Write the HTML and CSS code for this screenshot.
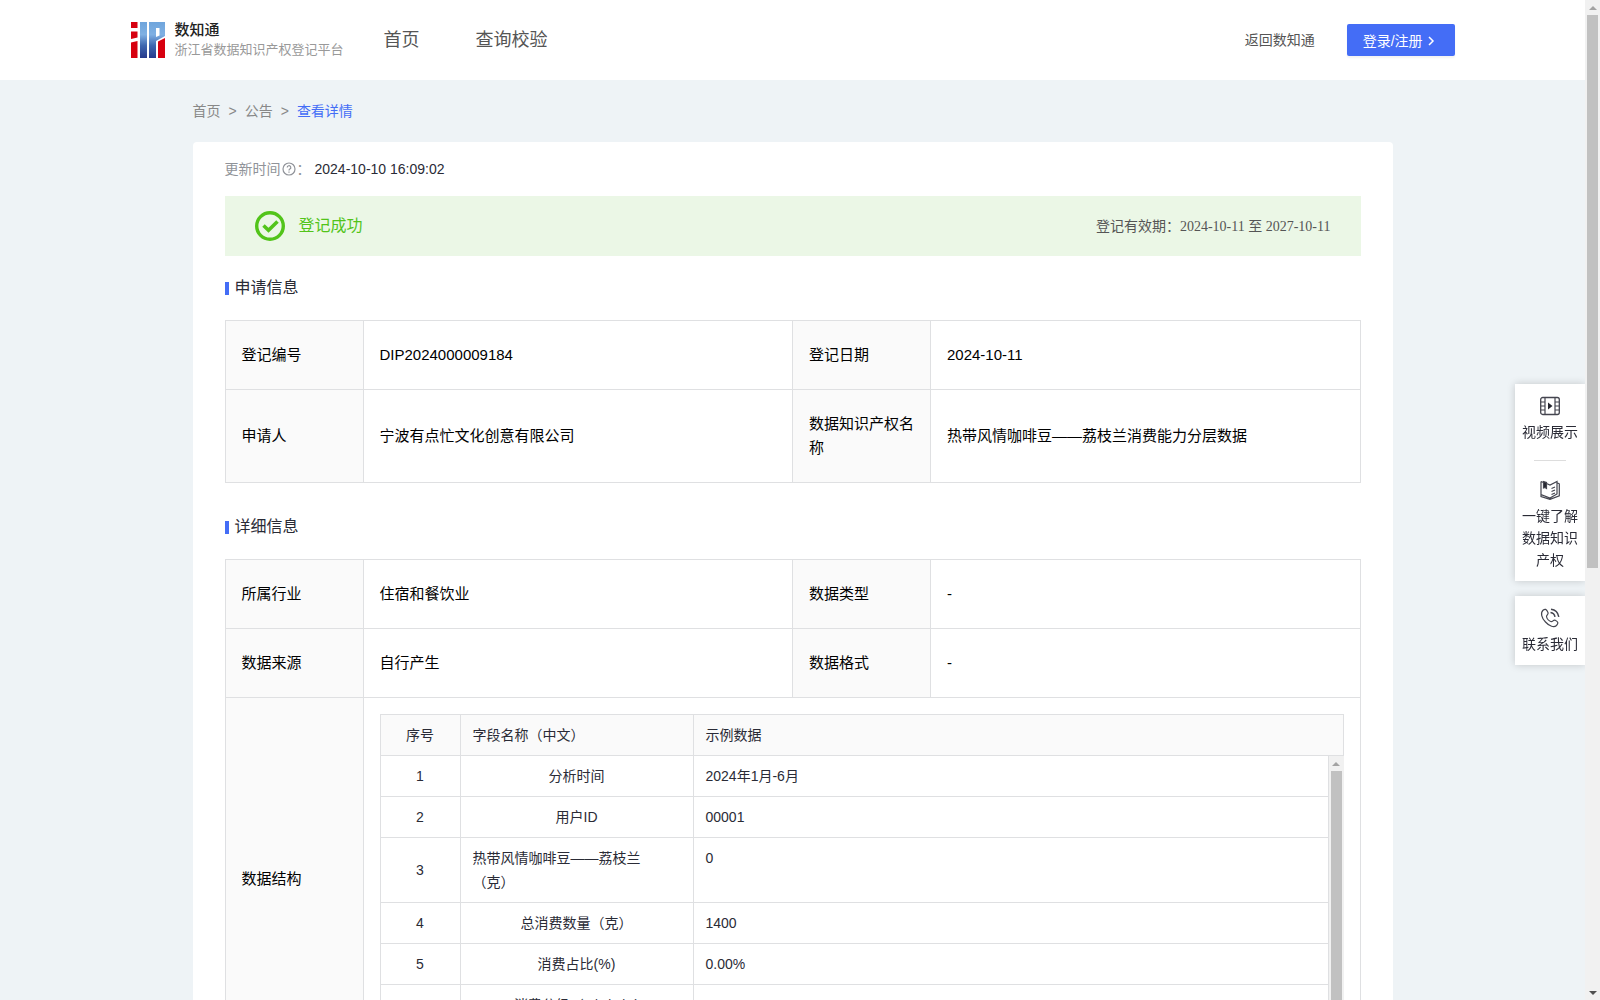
FILE: index.html
```html
<!DOCTYPE html>
<html lang="zh-CN">

<head>
    <meta charset="UTF-8">
    <meta name="viewport" content="width=device-width, initial-scale=1.0">
    <title>浙江省数据知识产权登记平台</title>
    <link rel="stylesheet" href="styles.css">
</head>

<body>
    <header class="header">
        <div class="header-inner">
            <a class="logo" href="#">
                <svg class="logo-mark" viewBox="0 0 34 36" aria-hidden="true">
                    <defs>
                        <linearGradient id="blue" x1="0" y1="0" x2="0" y2="1">
                            <stop offset="0" stop-color="#6fa5dc" />
                            <stop offset="0.35" stop-color="#7fb0e3" />
                            <stop offset="0.65" stop-color="#3f68b0" />
                            <stop offset="1" stop-color="#263a8c" />
                        </linearGradient>
                    </defs>
                    <path fill="#d7000f" d="M0 0h6.500v6H0zM0 9.500h6.500v6L0 17zM0 20.500l6.500-1.500v17H0z" />
                    <path fill="url(#blue)" d="M9 0h7v36H9zM18 0h16v14l-9 5v17h-7z" />
                    <path fill="#fff" d="M25 6h3.500v7.500L25 15z" />
                    <path fill="#d7000f" d="M27 19.500l7-3.500v20h-7z" />
                </svg>
                <span class="logo-text">
                    <span class="logo-name">数知通</span>
                    <span class="logo-desc">浙江省数据知识产权登记平台</span>
                </span>
            </a>
            <nav class="nav">
                <a href="#">首页</a>
                <a href="#">查询校验</a>
            </nav>
            <a class="back" href="#">返回数知通</a>
            <button class="login" type="button">登录/注册
                <svg width="8" height="10" viewBox="0 0 8 10" aria-hidden="true">
                    <path d="M2 1l4 4-4 4" fill="none" stroke="#fff" stroke-width="1.500" />
                </svg>
            </button>
        </div>
    </header>

    <main class="main">
        <nav class="crumbs">
            <a href="#">首页</a>
            <span>&gt;</span>
            <a href="#">公告</a>
            <span>&gt;</span>
            <a class="current" href="#">查看详情</a>
        </nav>

        <div class="card">
            <p class="update">
                <span class="update-label">更新时间<svg width="14" height="14" viewBox="0 0 14 14" aria-hidden="true">
                    <circle cx="7" cy="7" r="6" fill="none" stroke="#909399" stroke-width="1.200" />
                    <path d="M5.200 5.600a1.800 1.800 0 1 1 2.700 1.500q-.9.500-.9 1.300M7 9.500v1.200" fill="none" stroke="#909399" stroke-width="1.200" />
                </svg>：</span>
                <span>2024-10-10 16:09:02</span>
            </p>

            <div class="banner">
                <svg width="30" height="30" viewBox="0 0 30 30" aria-hidden="true">
                    <circle cx="15" cy="15" r="13.300" fill="none" stroke="#52c41a" stroke-width="3.400" />
                    <path d="M8.500 14.500l5 4.700 9-8.700" fill="none" stroke="#52c41a" stroke-width="3.600" />
                </svg>
                <span class="banner-state">登记成功</span>
                <span class="banner-period">登记有效期：<span class="date">2024-10-11 至 2027-10-11</span></span>
            </div>

            <h2 class="title">申请信息</h2>
            <table class="info">
                <colgroup>
                    <col class="col-label"><col><col class="col-label"><col>
                </colgroup>
                <tr>
                    <th>登记编号</th>
                    <td>DIP2024000009184</td>
                    <th>登记日期</th>
                    <td>2024-10-11</td>
                </tr>
                <tr>
                    <th>申请人</th>
                    <td>宁波有点忙文化创意有限公司</td>
                    <th>数据知识产权名称</th>
                    <td>热带风情咖啡豆——荔枝兰消费能力分层数据</td>
                </tr>
            </table>

            <h2 class="title title-next">详细信息</h2>
            <table class="info">
                <colgroup>
                    <col class="col-label"><col><col class="col-label"><col>
                </colgroup>
                <tr>
                    <th>所属行业</th>
                    <td>住宿和餐饮业</td>
                    <th>数据类型</th>
                    <td>-</td>
                </tr>
                <tr>
                    <th>数据来源</th>
                    <td>自行产生</td>
                    <th>数据格式</th>
                    <td>-</td>
                </tr>
                <tr>
                    <th>数据结构</th>
                    <td class="nested" colspan="3">
                        <table class="fields">
                            <colgroup>
                                <col class="col-no"><col class="col-name"><col>
                            </colgroup>
                            <tr>
                                <th class="no">序号</th>
                                <th>字段名称（中文）</th>
                                <th>示例数据</th>
                            </tr>
                        </table>
                        <div class="fields-body">
                            <table class="fields">
                                <colgroup>
                                    <col class="col-no"><col class="col-name"><col>
                                </colgroup>
                                <tr>
                                    <td class="no">1</td>
                                    <td class="name"><span>分析时间</span></td>
                                    <td>2024年1月-6月</td>
                                </tr>
                                <tr>
                                    <td class="no">2</td>
                                    <td class="name"><span>用户ID</span></td>
                                    <td>00001</td>
                                </tr>
                                <tr>
                                    <td class="no">3</td>
                                    <td class="name"><span>热带风情咖啡豆——荔枝兰（克）</span></td>
                                    <td>0</td>
                                </tr>
                                <tr>
                                    <td class="no">4</td>
                                    <td class="name"><span>总消费数量（克）</span></td>
                                    <td>1400</td>
                                </tr>
                                <tr>
                                    <td class="no">5</td>
                                    <td class="name"><span>消费占比(%)</span></td>
                                    <td>0.00%</td>
                                </tr>
                                <tr>
                                    <td class="no">6</td>
                                    <td class="name"><span>消费分级（A/B/C/D)</span></td>
                                    <td>D</td>
                                </tr>
                            </table>
                            <div class="scrollbar">
                                <span class="arrow arrow-up arrow-off"></span>
                                <span class="track"><span class="thumb thumb-fields"></span></span>
                                <span class="arrow arrow-down"></span>
                            </div>
                        </div>
                    </td>
                </tr>
            </table>
        </div>
    </main>

    <aside class="side">
        <div class="side-box">
            <a class="side-item" href="#">
                <svg width="20" height="20" viewBox="0 0 20 20" fill="none" stroke="#44454f" aria-hidden="true">
                    <rect x="0.700" y="1.500" width="18.600" height="17" rx="2" stroke-width="1.300" />
                    <path d="M5 1.500v17M15 1.500v17M1 6h4M1 10h4M1 14h4M15 6h4M15 10h4M15 14h4" stroke-width="1.200" />
                    <path d="M8 6.500v7l4.500-3.500z" fill="#25262f" stroke="none" />
                </svg>
                视频展示
            </a>
            <hr class="side-line">
            <a class="side-item" href="#">
                <svg width="20" height="20" viewBox="0 0 20 20" fill="none" stroke="#44454f" stroke-width="1.200" aria-hidden="true">
                    <path d="M1 1.500l2.500 1M6.500 3.500L10 5l7-3.500V14l-7 4-9-3.500v-13M17.500 3l1.800.8v12L10 19.400 1 16.500v-2" />
                    <path d="M11.500 8.500L15 7M11.500 11.500L15 10M11.500 14.500L15 13" />
                    <path d="M3.500 1.500l3 1v6L5 7.500l-1.500.5z" fill="#25262f" />
                </svg>
                一键了解数据知识产权
            </a>
        </div>
        <div class="side-box">
            <a class="side-item" href="#">
                <svg width="20" height="20" viewBox="0 0 20 20" fill="none" stroke="#44454f" stroke-width="1.200" aria-hidden="true">
                    <path d="M3 2.300C5 .5 6.500 1 8 4.500c.8 2-1.500 2.500-1.500 4 .5 2.500 2.500 4.500 4.800 5.200 1.700 0 2-2.200 4-1.400 3.200 1.700 3.200 3 1.200 5.200-2.500 2.300-7 .9-11-3.500C1.500 9.800.3 4.800 3 2.300z" />
                    <path d="M10.500 4.500c2.500.3 4 1.700 4.500 4.300M11 1.200c4.200.5 7 3 7.800 7.600" stroke-width="1.500" />
                </svg>
                联系我们
            </a>
        </div>
    </aside>

    <div class="scrollbar scrollbar-page">
        <span class="arrow arrow-up arrow-off"></span>
        <span class="track"><span class="thumb"></span></span>
        <span class="arrow arrow-down"></span>
    </div>
</body>

</html>
```

FILE: styles.css
```css
* {
    box-sizing: border-box;
}

body {
    margin: 0;
    padding-right: 15px;
    background: #eef3f6;
    color: #2a2b36;
    font-family: "Liberation Sans", "Noto Sans CJK SC", sans-serif;
    font-size: 14px;
    line-height: 22px;
    text-spacing-trim: space-all;
}

a {
    color: inherit;
    text-decoration: none;
}

table {
    width: 100%;
    border-collapse: collapse;
    table-layout: fixed;
}

th {
    font-weight: normal;
    text-align: left;
    background: #fafafa;
}

th,
td {
    border: 1px solid #dfe0e2;
}

.header {
    background: #fff;
}

.header-inner {
    display: flex;
    align-items: center;
    max-width: 1324px;
    height: 80px;
    margin: 0 auto;
    color: #555;
}

.logo {
    display: flex;
    gap: 10px;
    align-items: center;
}

.logo-mark {
    width: 34px;
    height: 36px;
}

.logo-text {
    display: flex;
    flex-direction: column;
    line-height: 20px;
}

.logo-name {
    color: #222;
    font-size: 15px;
    font-weight: 500;
}

.logo-desc {
    color: #999;
    font-size: 13px;
}

.nav {
    display: flex;
    flex: 1;
    gap: 56px;
    margin-left: 40px;
    font-size: 18px;
}

.login {
    height: 32px;
    margin-left: 32px;
    padding: 0 20px 0 16px;
    border: 0;
    border-radius: 2px;
    background: #446df6;
    box-shadow: 0 2px 2px rgba(0, 0, 0, 0.05);
    color: #fff;
    font-family: inherit;
    font-size: 14px;
}

.main {
    max-width: 1200px;
    margin: 0 auto;
    padding-bottom: 40px;
}

.crumbs {
    display: flex;
    gap: 8px;
    padding: 20px 0;
    color: #888;
}

.crumbs .current {
    color: #446df6;
}

.card {
    padding: 16px 32px 32px;
    border-radius: 4px;
    background: #fff;
}

.update {
    display: flex;
    gap: 4px;
    margin: 0 0 16px;
}

.update-label {
    display: flex;
    align-items: center;
    color: #909399;
}

.update-label svg {
    margin: 0 1px;
}

.banner {
    display: flex;
    align-items: center;
    height: 60px;
    padding: 0 30px;
    background: #ebf7e6;
}

.banner-state {
    flex: 1;
    margin-left: 14px;
    color: #52c41a;
    font-size: 16px;
}

.banner-period {
    color: #555;
}

.date {
    font-family: "Liberation Serif", "Noto Sans CJK SC", serif;
}

.title {
    display: flex;
    align-items: center;
    gap: 6px;
    margin: 21px 0;
    font-size: 16px;
    font-weight: normal;
}

.title::before {
    content: "";
    width: 4px;
    height: 13px;
    background: #446df6;
}

.title-next {
    margin-top: 33px;
}

.info {
    color: #000;
    font-size: 15px;
    line-height: 24px;
}

.info th,
.info td {
    padding: 22px 16px;
}

.col-label {
    width: 138px;
}

.info .nested {
    padding: 16px;
}

.fields {
    color: #2a2b36;
    font-size: 14px;
}

.info .fields th,
.info .fields td {
    padding: 8px 12px;
    vertical-align: top;
}

.info .fields .no {
    text-align: center;
    vertical-align: middle;
}

.info .fields .name {
    text-align: center;
}

.name span {
    display: inline-block;
    text-align: left;
    vertical-align: top;
}

.col-no {
    width: 80px;
}

.col-name {
    width: 233px;
}

.fields-body {
    display: flex;
    align-items: flex-start;
    height: 287px;
    overflow: hidden;
}

.fields-body .fields {
    flex: 1;
    margin-top: -1px;
}

/* scrollbars */
.scrollbar {
    display: flex;
    flex-direction: column;
    width: 15px;
    height: 100%;
    background: #f1f1f1;
}

.scrollbar-page {
    position: fixed;
    top: 0;
    right: 0;
}

.track {
    flex: 1;
    padding: 0 2px;
}

.thumb {
    display: block;
    height: 57%;
    background: #c1c1c1;
}

.thumb-fields {
    height: 95%;
}

.arrow {
    display: flex;
    align-items: center;
    justify-content: center;
    height: 15px;
}

.arrow::before {
    content: "";
    border: 4px solid transparent;
}

.arrow-up::before {
    border-top: 0;
    border-bottom-color: #505050;
}

.arrow-down::before {
    border-bottom: 0;
    border-top-color: #505050;
}

.arrow-off::before {
    border-bottom-color: #a3a3a3;
}

/* floating menu */
.side {
    position: fixed;
    top: 384px;
    right: 15px;
    width: 70px;
}

.side-box {
    margin-bottom: 15px;
    padding: 0 7px;
    background: #fff;
    box-shadow: 0 0 8px rgba(0, 0, 0, 0.18);
}

.side-item {
    display: flex;
    flex-direction: column;
    align-items: center;
    gap: 5px;
    padding: 12px 0 10px;
    text-align: center;
}

.side-line {
    width: 32px;
    margin: 7px auto;
    border: 0;
    border-top: 1px solid #ddd;
}
```
